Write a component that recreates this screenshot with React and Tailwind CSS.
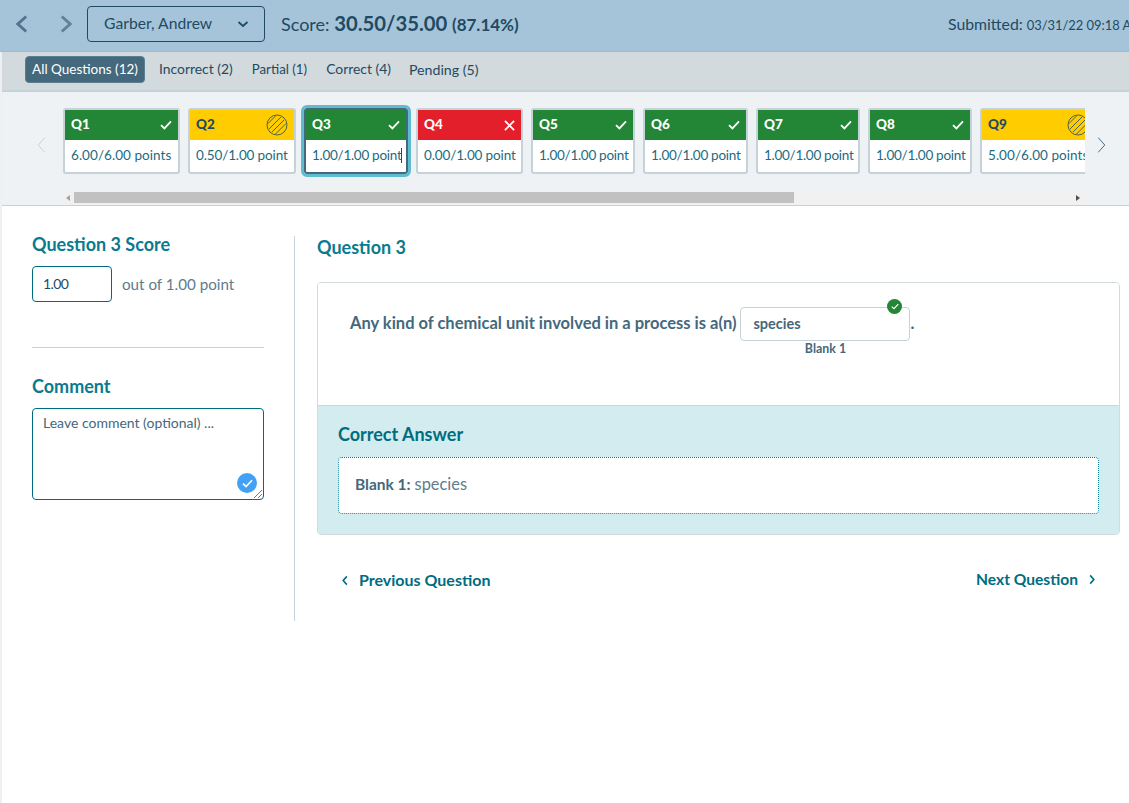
import React from "react";

const cards = [
  { q: "Q1", pts: "6.00/6.00 points", w: "w-[117px]", t: "ok", tr: "tracking-[0.05px]" },
  { q: "Q2", pts: "0.50/1.00 point", w: "w-[108px]", t: "partial", tr: "tracking-[-0.13px]" },
  { q: "Q3", pts: "1.00/1.00 point", w: "w-[104px]", t: "ok", focus: true, tr: "tracking-[-0.28px]" },
  { q: "Q4", pts: "0.00/1.00 point", w: "w-[107px]", t: "bad", tr: "tracking-[-0.13px]" },
  { q: "Q5", pts: "1.00/1.00 point", w: "w-[104px]", t: "ok", tr: "tracking-[-0.28px]" },
  { q: "Q6", pts: "1.00/1.00 point", w: "w-[105px]", t: "ok", tr: "tracking-[-0.28px]" },
  { q: "Q7", pts: "1.00/1.00 point", w: "w-[104px]", t: "ok", tr: "tracking-[-0.28px]" },
  { q: "Q8", pts: "1.00/1.00 point", w: "w-[104px]", t: "ok", tr: "tracking-[-0.28px]" },
  { q: "Q9", pts: "5.00/6.00 points", w: "w-[117px]", t: "partial", tr: "tracking-[0.05px]" },
];

const Chev = ({ dir = "left", className = "", sw = 2, wide = false }) => {
  const a = wide ? (dir === "left" ? "13,3 3,12 13,21" : "3,3 13,12 3,21") : dir === "left" ? "12,3 4,12 12,21" : "4,3 12,12 4,21";
  return (
    <svg viewBox="0 0 16 24" className={className} fill="none" stroke="currentColor" strokeWidth={sw}>
      <polyline points={a} />
    </svg>
  );
};

const Check = ({ className = "" }) => (
  <svg viewBox="0 0 12 10" className={className} fill="none" stroke="currentColor" strokeWidth="1.8">
    <polyline points="1,5.2 4.4,8.4 11,1.4" />
  </svg>
);

const Hatch = () => (
  <svg viewBox="0 0 22 22" className="w-[22px] h-[22px] shrink-0" fill="none" stroke="#21485f" strokeWidth="0.8">
    <circle cx="11" cy="11" r="10" />
    <path d="M3 15 15 3M6 18 18 6M9.5 20 20 9.5M2 9.5 9.5 2" />
  </svg>
);

function Card({ c }) {
  const head =
    c.t === "ok" ? "bg-[#238636] text-white" : c.t === "bad" ? "bg-[#e31f2b] text-white" : "bg-[#ffcc00] text-[#1f4a62]";
  return (
    <div
      className={`relative shrink-0 ${c.w} rounded-[3px] bg-white border-2 ${
        c.focus ? "border-[#44687c] outline-3 outline-[#5fbcd0]" : "border-[#c5d2d8]"
      }`}
    >
      <div className={`h-[30px] flex items-center justify-between pl-[6px] pr-[6px] ${head}`}>
        <span className="text-[13.5px] font-black leading-none">{c.q}</span>
        {c.t === "ok" && <Check className="w-[12px] h-[10px] mb-[1px]" />}
        {c.t === "bad" && (
          <svg viewBox="0 0 12 12" className="w-[11px] h-[11px]" stroke="currentColor" strokeWidth="2">
            <path d="M1 1 11 11M11 1 1 11" />
          </svg>
        )}
        {c.t === "partial" && <Hatch />}
      </div>
      <div className={`h-[32px] flex items-center pl-[6px] pb-[1px] text-[13.5px] text-[#1c6b7f] whitespace-nowrap overflow-hidden ${c.tr}`}>
        {c.pts}
        {c.focus && <span className="inline-block w-px h-[15px] bg-[#1f4a62]" />}
      </div>
    </div>
  );
}

export default function App() {
  return (
    <div className="w-[1129px] h-[803px] overflow-hidden bg-white text-[#44687c] font-['Lato','Noto_Sans',sans-serif]">
      <header className="h-[52px] bg-[#a5c4da] border-b border-[#9db9cd] flex items-center pb-[3px] pl-[14px] pr-0 text-[#1f4a62]">
        <Chev wide className="w-[16px] h-[20px] text-[#50758d]" sw={3.5} />
        <Chev wide dir="right" className="w-[16px] h-[20px] text-[#5f8298] ml-[28px]" sw={3.5} />
        <div className="ml-[13px] w-[178px] h-[36px] rounded-[4px] border border-[#1f4a62] flex items-center justify-between pl-[16px] pr-[15px] text-[15.7px]">
          <span>Garber, Andrew</span>
          <Chev className="w-[12px] h-[12px] -rotate-90" sw={3.5} />
        </div>
        <div className="ml-[16px] text-[18px] whitespace-nowrap mb-[2px]">
          Score: <span className="font-bold text-[20.3px]">30.50/35.00</span>{" "}
          <span className="font-bold text-[17px]">(87.14%)</span>
        </div>
        <div className="ml-auto text-[15.8px] whitespace-nowrap w-[181px] overflow-hidden">
          Submitted: <span className="text-[12.9px]">03/31/22 09:18 AM</span>
        </div>
      </header>

      <div className="border-l-2 border-[#eef0f1] h-[751px]">
        <nav className="h-[40px] bg-[#d2dadd] border-b-2 border-[#c5d2d8] flex items-center pl-[23px] pb-[3px] text-[13.9px] text-[#1f4a62] whitespace-nowrap">
          <span className="h-[27px] flex items-center rounded-[4px] bg-[#44687c] border border-[#5a7f93] text-white text-[13.5px] w-[120px] justify-center">
            All Questions (12)
          </span>
          <span className="ml-[14px]">Incorrect (2)</span>
          <span className="ml-[19px] text-[13.3px]">Partial (1)</span>
          <span className="ml-[19px]">Correct (4)</span>
          <span className="ml-[18px] text-[14.2px]">Pending (5)</span>
        </nav>

        <section className="h-[114px] bg-[#eff2f4] border-b border-[#c5d2d8] flex">
          <div className="w-[61px] shrink-0 flex items-center justify-start pl-[33px] pb-[7px] text-[#c5d2d8]">
            <Chev className="w-[13px] h-[24px]" sw={1.2} />
          </div>
          <div className="w-[1022px] shrink-0 overflow-hidden">
            <div className="h-[98px] pt-[16px] flex items-start gap-[8px] overflow-hidden">
              {cards.map((c) => (
                <Card key={c.q} c={c} />
              ))}
            </div>
            <div className="h-[15px] bg-[#f1f1f1] flex items-center pl-[3px] pr-[5px]">
              <span className="w-0 h-0 border-y-[3.5px] border-y-transparent border-r-[4px] border-r-[#a3a3a3]" />
              <span className="ml-[4px] w-[720px] h-[11px] bg-[#c1c1c1]" />
              <span className="ml-auto w-0 h-0 border-y-[3.5px] border-y-transparent border-l-[4px] border-l-[#505050]" />
            </div>
          </div>
          <div className="flex-1 flex items-center pl-[10px] pb-[7px] text-[#44687c]">
            <Chev dir="right" className="w-[13px] h-[24px]" sw={1.2} />
          </div>
        </section>

        <main className="flex pt-[30px]">
          <aside className="w-[293px] shrink-0 pl-[30px] border-r border-[#c5d2d8] h-[385px]">
            <h2 className="text-[18px] font-bold text-[#0a7a8f] leading-[18px] -mt-[1px]">Question 3 Score</h2>
            <div className="flex items-center mt-[13px]">
              <div className="w-[80px] h-[36px] rounded-[4px] border border-[#006c7f] flex items-center pl-[10px] text-[14px] tracking-[-0.6px] text-[#1f4a62] pb-[2px]">
                1.00
              </div>
              <span className="ml-[10px] text-[15.2px] text-[#5f7b8c]">out of 1.00 point</span>
            </div>
            <div className="w-[232px] h-px bg-[#c5d2d8] mt-[45px]" />
            <h2 className="text-[18px] font-bold text-[#0a7a8f] leading-[18px] mt-[29px]">Comment</h2>
            <div className="relative w-[232px] h-[92px] mt-[13px] rounded-[4px] border border-[#006c7f] pl-[10px] pt-[3px] text-[14px] text-[#44687c]">
              Leave comment (optional) ...
              <span className="absolute right-[6px] bottom-[6px] w-[20px] h-[20px] rounded-full bg-[#42a1f5] text-white flex items-center justify-center">
                <Check className="w-[11px] h-[9px]" />
              </span>
              <svg viewBox="0 0 8 8" className="absolute right-[1px] bottom-[1px] w-[8px] h-[8px]" stroke="#555" strokeWidth="0.8">
                <path d="M0 8 8 0M4 8 8 4" />
              </svg>
            </div>
          </aside>

          <div className="w-[803px] ml-[22px]">
            <h1 className="text-[18px] font-bold text-[#0a7a8f] leading-[22px]">Question 3</h1>
            <div className="mt-[24px] rounded-[4px] border border-[#d2dadd] overflow-hidden">
              <div className="h-[122px] bg-white pl-[32px] pt-[24px] flex items-start text-[16.5px] font-bold text-[#44687c]">
                <span className="mt-[4px] whitespace-nowrap">Any kind of chemical unit involved in a process is a(n)</span>
                <div className="relative ml-[4px] w-[170px] shrink-0">
                  <div className="h-[34px] rounded-[4px] border border-[#c5d2d8] flex items-center pl-[12px] text-[14.5px]">
                    species
                  </div>
                  <span className="absolute -top-[8px] right-[8px] w-[15px] h-[15px] rounded-full bg-[#238636] text-white flex items-center justify-center">
                    <Check className="w-[8px] h-[7px]" />
                  </span>
                  <div className="text-center text-[12.4px] mt-[1px] leading-[14px]">Blank 1</div>
                </div>
                <span className="mt-[4px]">.</span>
              </div>
              <div className="h-[129px] bg-[#d2ecf0] border-t border-[#c5d8dd] px-[20px] pt-[17px]">
                <h3 className="text-[18px] font-bold text-[#006c7f] leading-[22px]">Correct Answer</h3>
                <div className="mt-[12px] h-[57px] rounded-[4px] bg-white border border-dotted border-[#0a7a8f] flex items-center pb-[2px] pl-[16px] text-[15.5px]">
                  <b>Blank 1:</b>
                  <span className="ml-[4px] text-[16.4px] text-[#5f7b8c]">species</span>
                </div>
              </div>
            </div>
            <div className="flex justify-between items-center mt-[33px] px-[24px] text-[16px] font-bold text-[#006c7f]">
              <span className="flex items-center gap-[10px]">
                <Chev className="w-[8px] h-[11px]" sw={3.5} />
                Previous Question
              </span>
              <span className="flex items-center gap-[10px]">
                <span className="text-[15.6px]">Next Question</span>
                <Chev dir="right" className="w-[8px] h-[11px]" sw={3.5} />
              </span>
            </div>
          </div>
        </main>
      </div>
    </div>
  );
}
